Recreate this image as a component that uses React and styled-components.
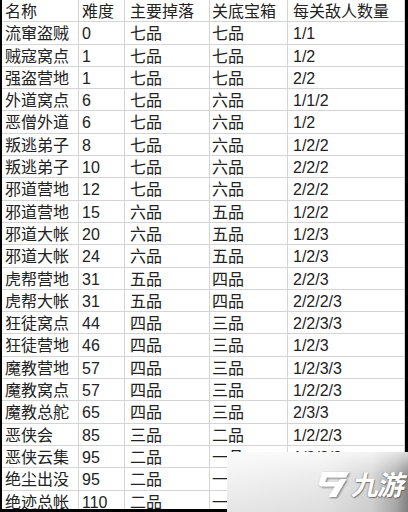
import React from 'react'
import styled, { createGlobalStyle } from 'styled-components'

const GlobalStyle = createGlobalStyle`
  html, body {
    margin: 0;
    padding: 0;
    background: #000;
  }
  body {
    width: 408px;
    height: 512px;
    overflow: hidden;
  }
`

const rows = [
  ['流窜盗贼', '0', '七品', '七品', '1/1'],
  ['贼寇窝点', '1', '七品', '七品', '1/2'],
  ['强盗营地', '1', '七品', '七品', '2/2'],
  ['外道窝点', '6', '七品', '六品', '1/1/2'],
  ['恶僧外道', '6', '七品', '六品', '1/2'],
  ['叛逃弟子', '8', '七品', '六品', '1/2/2'],
  ['叛逃弟子', '10', '七品', '六品', '2/2/2'],
  ['邪道营地', '12', '七品', '六品', '2/2/2'],
  ['邪道营地', '15', '六品', '五品', '1/2/2'],
  ['邪道大帐', '20', '六品', '五品', '1/2/3'],
  ['邪道大帐', '24', '六品', '五品', '1/2/3'],
  ['虎帮营地', '31', '五品', '四品', '2/2/3'],
  ['虎帮大帐', '31', '五品', '四品', '2/2/2/3'],
  ['狂徒窝点', '44', '四品', '三品', '2/2/3/3'],
  ['狂徒营地', '46', '四品', '三品', '1/2/3'],
  ['魔教营地', '57', '四品', '三品', '1/2/3/3'],
  ['魔教窝点', '57', '四品', '三品', '1/2/2/3'],
  ['魔教总舵', '65', '四品', '三品', '2/3/3'],
  ['恶侠会', '85', '三品', '二品', '1/2/2/3'],
  ['恶侠云集', '95', '二品', '一品', '1/2/2/3'],
  ['绝尘出没', '95', '二品', '一品', '2/3/3/3'],
  ['绝迹总帐', '110', '二品', '一品', '2/3/3/3'],
]

const header = ['名称', '难度', '主要掉落', '关底宝箱', '每关敌人数量']
const pads = [3, 3, 5, 2, 5]

const Frame = styled.div`
  position: relative;
  width: 408px;
  height: 512px;
  padding: 0 3px 3px 2px;
  box-sizing: border-box;
  overflow: hidden;
`

const Sheet = styled.div`
  display: grid;
  grid-template-columns: 77px 46px 85px 78px 1fr;
  grid-auto-rows: 22.3px;
  background: #fff;
  height: 509px;
  overflow: hidden;
`

const Cell = styled.div`
  box-sizing: border-box;
  border-right: 1px solid #d4d4d4;
  border-bottom: 1px solid #d4d4d4;
  padding-left: ${p => p.$pad}px;
  padding-top: 2px;
  font-family: "Liberation Sans", "Noto Sans CJK SC", sans-serif;
  font-size: 16px;
  line-height: 19px;
  color: #222;
  white-space: nowrap;
  overflow: hidden;
`

const Watermark = styled.div`
  position: absolute;
  left: 227px;
  top: 452px;
  width: 181px;
  height: 60px;
  background:
    linear-gradient(to bottom, rgba(255,255,255,0.7) 0%, rgba(255,255,255,0) 40%, rgba(0,0,0,0.06) 100%),
    linear-gradient(to right, #f3f3f3 0%, #ebebeb 55%, #d8d8d8 80%, #b0b0b0 93%, #888 100%);
  display: flex;
  align-items: center;
  justify-content: flex-end;
  padding: 4px 3px 0 0;
  box-sizing: border-box;
  gap: 1px;
`

const Brand = styled.span`
  font-family: "Noto Sans CJK SC", sans-serif;
  font-weight: 700;
  font-size: 27px;
  line-height: 30px;
  color: #fff;
  letter-spacing: -1px;
  text-shadow: 1px 1px 1px rgba(80, 80, 80, 0.75), -1px 0 1px rgba(120, 120, 120, 0.45);
  transform: skewX(-12deg);
`

const Logo = () => (
  <svg width="40" height="30" viewBox="0 0 38 30">
    <defs>
      <filter id="sh" x="-20%" y="-20%" width="140%" height="140%">
        <feDropShadow dx="1" dy="1" stdDeviation="0.8" floodColor="#555" floodOpacity="0.75" />
      </filter>
    </defs>
    <path
      filter="url(#sh)"
      fill="#fff"
      d="M9 3 L36 3 L33 8.5 L14 8.5 L12 13 L25 13 L28 10 L33.5 10 L23 28 L15.5 28 L22 17.5 L10 17.5 Q5 17.5 6.5 13 Z"
    />
  </svg>
)

export default function App() {
  return (
    <>
      <GlobalStyle />
      <Frame>
        <Sheet>
          {[header, ...rows].map((r, i) =>
            r.map((c, j) => (
              <Cell key={i + '-' + j} $pad={pads[j]}>{c}</Cell>
            ))
          )}
        </Sheet>
        <Watermark>
          <Logo />
          <Brand>九游</Brand>
        </Watermark>
      </Frame>
    </>
  )
}
